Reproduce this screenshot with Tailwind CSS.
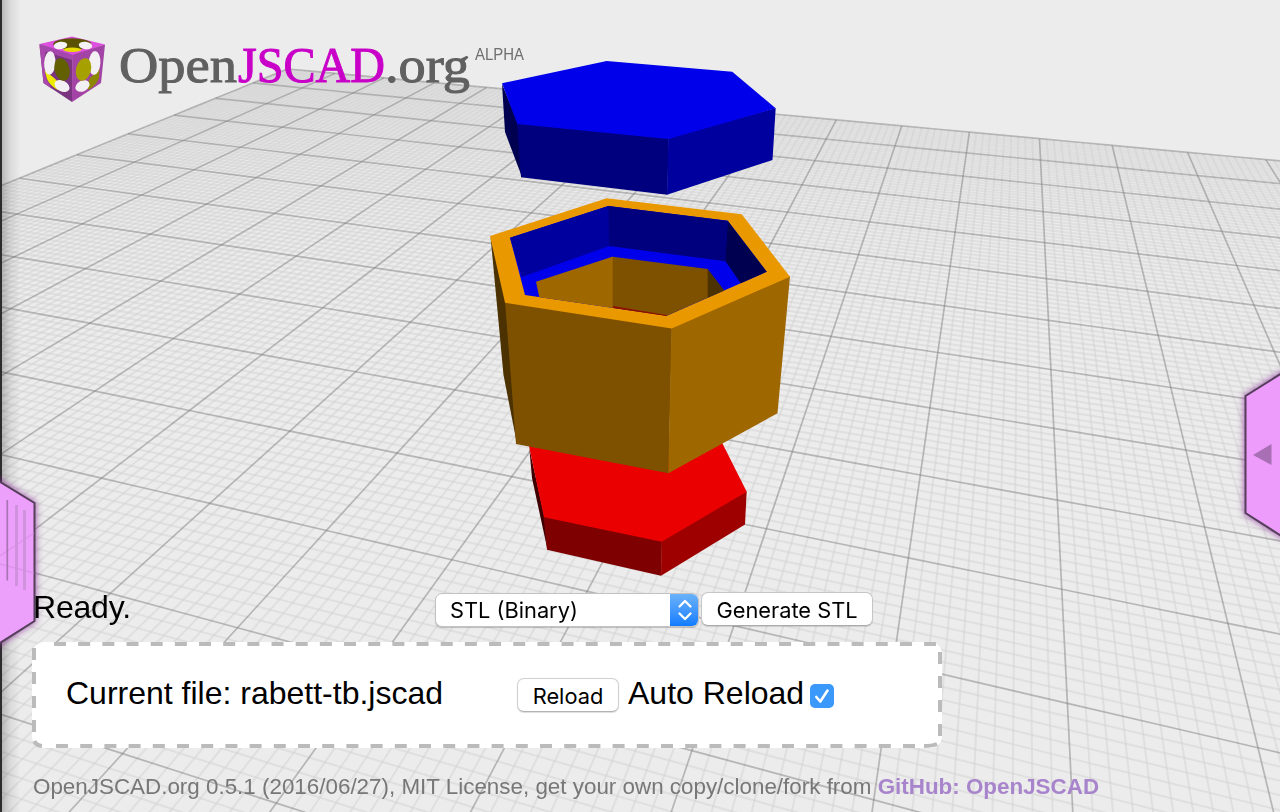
<!DOCTYPE html>
<html lang="en">
<head>
<meta charset="utf-8">
<title>OpenJSCAD.org</title>
<script src="https://cdn.jsdelivr.net/npm/@tailwindcss/browser@4"></script>
</head>
<body class="bg-[#ececec] font-['Liberation_Sans',Arial,sans-serif] text-black">
<div class="relative w-[1280px] h-[812px] overflow-hidden">

  <!-- 3D viewer -->
  <canvas id="plane" width="1280" height="812" class="absolute inset-0 w-[1280px] h-[812px]"></canvas>
  <svg class="absolute inset-0" width="1280" height="812" viewBox="0 0 1280 812">
    <!-- red base -->
    <path fill="#400000" d="M529.3 448 544.5 517 547.5 549.7 532 478Z"/>
    <path fill="#7e0000" d="M543.5 516 662 540 661 575.7 547 549.7Z"/>
    <path fill="#9e0000" d="M661.5 540 746.7 491 745 524.5 661 575.7Z"/>
    <path fill="#ea0000" d="M529 446 721.7 442 746.7 491.7 661.7 541.7 544 517.3Z"/>
    <!-- orange body -->
    <path fill="#4c3200" d="M490.5 236 506 302 517 444 503.5 375Z"/>
    <path fill="#7e5100" d="M505 301 672 327 668.5 473.3 516 444Z"/>
    <path fill="#9f6700" d="M671.5 326 790 276 777.5 413.3 668.3 473.3Z"/>
    <path fill="#ea9800" d="M490 236 606.7 198.3 741.7 214.3 790 276.7 671.7 328.5 505 302.7Z"/>
    <path fill="#0000ea" d="M510 237.7 608.3 206 727.7 220.7 766.7 271.7 666.7 315.7 525 295Z"/>
    <path fill="#00009e" d="M510 237.7 609 205.8 609.3 246 521.7 277Z"/>
    <path fill="#00007e" d="M608.5 206 727.7 220.7 725.5 261.2 609 246Z"/>
    <path fill="#000050" d="M727.7 220.7 766.7 271.7 740.7 283.3 725.3 261Z"/>
    <path fill="#9f6700" d="M536 281.7 613 256.5 613 308 539.3 297.2Z"/>
    <path fill="#7e5100" d="M612.7 256.7 708 269 708 297.5 666.7 315.7 612.7 307.8Z"/>
    <path fill="#4c3200" d="M707.7 269 724.3 290.5 707.7 297.8Z"/>
    <path fill="#8e1000" d="M613 306 666.7 315 666.7 315.9 613 308Z"/>
    <!-- blue lid -->
    <path fill="#000050" d="M502 84 518.5 124 522 177 505 132Z"/>
    <path fill="#00007e" d="M517 123 668.8 138 667.3 194.7 521 177.3Z"/>
    <path fill="#00009e" d="M668.3 138 775.7 108 772.5 160 667 194.7Z"/>
    <path fill="#0000ea" d="M502 83.3 606.7 61 732.3 71.7 775.7 108.3 668.3 139 517.3 124Z"/>
  </svg>

  <!-- left window edge -->
  <div class="absolute left-0 top-0 h-full w-5 bg-linear-to-r from-black/25 via-black/8 to-transparent"></div>
  <div class="absolute left-0 top-0 h-full w-0.5 bg-[#2c2c2e]"></div>

  <!-- slide-out tabs -->
  <svg class="absolute left-0 top-[460px]" width="60" height="200" viewBox="0 460 60 200">
    <defs><filter id="glow" x="-50%" y="-20%" width="200%" height="140%"><feGaussianBlur stdDeviation="3.5"/></filter></defs>
    <path d="M-4 479.500 34.500 503V621L-4 645.500Z" fill="#a020b0" stroke="#7d2a8c" stroke-width="3" opacity=".75" filter="url(#glow)"/>
    <path d="M-4 479.500 34.500 503V621L-4 645.500Z" fill="#eda0fb" stroke="#543e5a" stroke-width="2"/>
    <path d="M0 556 34 533M0 564 34 573" stroke="#d68ee4" stroke-width="1.500" opacity=".7"/>
    <path d="M7.300 500V580.500" stroke="#a874b4" stroke-width="1.700"/>
    <path d="M16.500 505V586M24.500 510V590" stroke="#cd92da" stroke-width="2.800"/>
  </svg>
  <svg class="absolute right-0 top-[350px]" width="60" height="210" viewBox="1220 350 60 210">
    <path d="M1286 370.500 1245.500 396V513L1286 539Z" fill="#a020b0" stroke="#7d2a8c" stroke-width="3" opacity=".75" filter="url(#glow)"/>
    <path d="M1286 370.500 1245.500 396V513L1286 539Z" fill="#ed9cfb" stroke="#543e5a" stroke-width="2"/>
    <path d="M1253 455 1271.500 444V465Z" fill="#a96fb4"/>
  </svg>

  <!-- page content -->
  <div class="relative flex h-full flex-col pl-8">
    <header class="h-[590px]">
      <svg width="520" height="110" viewBox="32 0 520 110">
        <g>
          <path fill="#dd50dd" d="M39.500 44 72 36.500 105 44.500 72.500 56Z"/>
          <path fill="#7a3480" d="M39.500 44 72.500 55 72 102 43.500 83Z"/>
          <path fill="#a343a5" d="M72.200 55 105 44.500 101 83 72 102Z"/>
          <path fill="#b84fc0" d="M39.500 44 72.500 55 72.300 60 40 50Z" opacity=".7"/>
          <path fill="#a848ac" d="M39.500 46 46 50Q43 62 46 78L52 89 43.500 83Z"/>
          <ellipse cx="72.300" cy="44" rx="19" ry="5.800" fill="#5a5200"/>
          <ellipse cx="60.500" cy="45.500" rx="6.800" ry="3.700" fill="#f4f2f4" transform="rotate(-8 60.500 45.500)"/>
          <ellipse cx="85.500" cy="45.500" rx="6.800" ry="3.700" fill="#f4f2f4" transform="rotate(8 85.500 45.500)"/>
          <ellipse cx="72.300" cy="49.800" rx="9" ry="2.200" fill="#e8dc00"/>
          <path d="M44.500 70Q50 75 53 77Q60 82 58 90Q50 86 47 79Z" fill="#eeea00"/>
          <ellipse cx="49.800" cy="63" rx="5.700" ry="11.700" fill="#f2f0f2" transform="rotate(3 49.800 63)"/>
          <ellipse cx="62" cy="86" rx="8" ry="5.300" fill="#f2f0f2" transform="rotate(28 62 86)"/>
          <ellipse cx="62" cy="69.500" rx="7.500" ry="11.500" fill="#626000" transform="rotate(-14 62 69.500)"/>
          <path d="M99.500 68Q96 73 90 78Q87 83 88 90Q96 86 99 78Z" fill="#8c8600"/>
          <ellipse cx="94.500" cy="63" rx="5.900" ry="11.900" fill="#f2f0f2" transform="rotate(4 94.500 63)"/>
          <ellipse cx="82.500" cy="86" rx="7.500" ry="5.300" fill="#f2f0f2" transform="rotate(-28 82.500 86)"/>
          <ellipse cx="83.500" cy="69.500" rx="7.500" ry="11.500" fill="#a6a000" transform="rotate(14 83.500 69.500)"/>
        </g>
        <g font-family="Liberation Serif, Times New Roman, serif" font-size="51" stroke-width="1">
          <text x="119" y="82" textLength="118" lengthAdjust="spacingAndGlyphs" fill="#606060" stroke="#606060">Open</text>
          <text x="238" y="82" textLength="147" lengthAdjust="spacingAndGlyphs" fill="#c800c8" stroke="#c800c8">JSCAD</text>
          <text x="385" y="82" textLength="85" lengthAdjust="spacingAndGlyphs" fill="#606060" stroke="#606060">.org</text>
        </g>
        <text x="475" y="60" font-family="Liberation Sans, Arial, sans-serif" font-size="17" textLength="49" lengthAdjust="spacingAndGlyphs" fill="#6f6f6f">ALPHA</text>
      </svg>
    </header>

    <div class="flex h-[52px] items-start">
      <div class="w-[403px] text-[32px] leading-[34px] pl-px"><span id="status" class="tracking-[-0.2px]">Ready.</span></div>
      <div class="mt-[3px] flex h-[34px] w-[264px] overflow-hidden rounded-[7px] border border-[#c2c2c2] bg-white shadow-[0_1px_1px_#0003]">
        <span class="flex-1 pl-[14px] font-['Inter',sans-serif] text-[21.8px] leading-[33px]">STL (Binary)</span>
        <span class="-my-px -mr-px flex w-[29px] items-center justify-center bg-linear-to-b from-[#6bb3fa] to-[#067aff]">
          <svg width="16" height="24" viewBox="0 0 16 24" fill="none" stroke="#fff" stroke-width="2.300" stroke-linecap="round" stroke-linejoin="round"><path d="M2.500 8.500 8 3l5.500 5.500M2.500 15.500 8 21l5.500-5.500"/></svg>
        </span>
      </div>
      <button class="ml-[2px] mt-[2px] h-[34px] w-[172px] rounded-[7px] border border-[#c6c6c6] border-b-[#aaa] bg-white font-['Inter',sans-serif] text-[21.8px] leading-[33px] pt-px shadow-[0_1px_1px_#0002]">Generate STL</button>
    </div>

    <div class="relative flex h-[106px] w-[910px] items-center rounded-xl bg-white pl-[34px]">
      <svg class="absolute inset-0" width="910" height="106" viewBox="32 642 910 106" fill="none" stroke="#bbb" stroke-width="4">
        <path d="M54 644H936" stroke-dasharray="12 12.170"/>
        <path d="M34 648V735" stroke-dasharray="12 12"/>
        <path d="M940 652V738" stroke-dasharray="12 12"/>
        <path d="M56 746H922" stroke-dasharray="12 12.200"/>
        <path d="M34.500 741Q36 745.500 42 746M924 746Q932 746 937 744"/>
      </svg>
      <span class="w-[451px] text-[32px] leading-[34px] -mt-1">Current file: rabett-tb.jscad</span>
      <button class="h-[34px] w-[102px] rounded-[7px] border border-[#cfcfcf] border-b-[#b4b4b4] bg-white font-['Inter',sans-serif] text-[21.8px] leading-[33px] pt-px shadow-[0_1px_1px_#0002]">Reload</button>
      <span class="ml-[9px] w-[182px] text-[32px] leading-[34px] -mt-1 whitespace-nowrap">Auto Reload</span>
      <span class="mt-[2px] flex size-6 items-center justify-center rounded-[5px] bg-[#3b99fc]">
        <svg width="24" height="24" viewBox="0 0 24 24" fill="none" stroke="#fff" stroke-width="2.600" stroke-linecap="round" stroke-linejoin="round"><path d="M6.300 13 10.300 17.500 17.500 6.500"/></svg>
      </span>
    </div>

    <footer class="mt-[25px] pl-px text-[22.4px] leading-[28px] whitespace-nowrap text-[#777]">OpenJSCAD.org 0.5.1 (2016/06/27), MIT License, get your own copy/clone/fork from <a class="font-bold text-[#a884cc]">GitHub: OpenJSCAD</a></footer>
  </div>
</div>

<script>
// Camera calibration: [column, row, screen x, screen y] of grid crossings.
const marks = [
  [0,0,1039.3,138.7],[0,3,1043.3,212],[0,6,1048.7,320.3],[0,8,1054,428.7],[0,10,1063,589.7],[0,11,1068.3,703.7],
  [-1,1,965.7,152],[-1,5,950,266.7],[-1,8,930,408.3],[-1,10,909,557.3],
  [-2,0,900,126.7],[-2,4,869,222.7],[-2,7,831,336.7],[-2,9,792.7,452.7],
  [1,0,1112.7,145.3],[1,5,1147,291.3],[1,8,1186.7,449.3],[1,10,1227.7,622.3],[1,11,1258.7,746],
  [2,0,1189.3,152.3],[2,3,1221.3,231],[2,6,1273.3,350.7],
  [-13,0,291,69],[-13,3,172,115],[-13,6,21.7,176.7],[-10,6,205,203.7],[-7,6,418.3,233],
  [-12,7,15,214],[-8,7,295.7,256.7],[-9,8,160,281.7],[-6,8,410,322.7],
  [-9,9,88.3,323.7],[-7,9,261.7,355],[-5,9,454,390],[-7,10,188.3,410.7],[-5,10,396.7,454],
  [-7,11,100,480],[-6,11,210,504],[-6,12,116.7,591.7],[-5,13,125,751.7]
];

// Least-squares projective transform (8 unknowns).
const A = Array.from({length: 8}, () => new Array(9).fill(0));
const addRow = (r, b) => {
  for (let i = 0; i < 8; i++) {
    for (let j = 0; j < 8; j++) A[i][j] += r[i] * r[j];
    A[i][8] += r[i] * b;
  }
};
for (const [u, v, x, y] of marks) {
  addRow([u, v, 1, 0, 0, 0, -u * x, -v * x], x);
  addRow([0, 0, 0, u, v, 1, -u * y, -v * y], y);
}
for (let i = 0; i < 8; i++) {
  let p = i;
  for (let k = i + 1; k < 8; k++) if (Math.abs(A[k][i]) > Math.abs(A[p][i])) p = k;
  [A[i], A[p]] = [A[p], A[i]];
  for (let k = 0; k < 8; k++) {
    if (k === i) continue;
    const f = A[k][i] / A[i][i];
    for (let j = i; j < 9; j++) A[k][j] -= f * A[i][j];
  }
}
const h = A.map((r, i) => r[8] / r[i]);
const project = (u, v) => {
  const w = h[6] * u + h[7] * v + 1;
  return [(h[0] * u + h[1] * v + h[2]) / w, (h[3] * u + h[4] * v + h[5]) / w, w];
};

const ctx = document.getElementById('plane').getContext('2d');
const line = (u1, v1, u2, v2) => {
  ctx.beginPath();
  let pen = false;
  for (let i = 0; i <= 40; i++) {
    const [x, y, w] = project(u1 + (u2 - u1) * i / 40, v1 + (v2 - v1) * i / 40);
    if (w < 0.05) { pen = false; continue; }
    pen ? ctx.lineTo(x, y) : ctx.moveTo(x, y);
    pen = true;
  }
  ctx.stroke();
};
const L = -13, R = 7, B = 15;
for (const major of [false, true]) {
  ctx.lineWidth = major ? 1.7 : 2;
  ctx.strokeStyle = major ? 'rgba(128,128,128,0.5)' : 'rgba(204,204,204,0.4)';
  for (let i = L * 10; i <= R * 10; i++) if ((i % 10 === 0) === major) line(i / 10, 0, i / 10, B);
  for (let i = 0; i <= B * 10; i++) if ((i % 10 === 0) === major) line(L, i / 10, R, i / 10);
}
</script>
</body>
</html>
